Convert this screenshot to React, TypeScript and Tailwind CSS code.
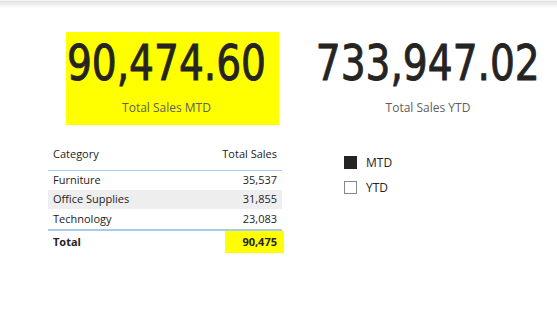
const rows = [
  { category: 'Furniture', sales: '35,537', h: 'h-[19px]' },
  { category: 'Office Supplies', sales: '31,855', h: 'h-[19px]' },
  { category: 'Technology', sales: '23,083', h: 'h-[20px]' },
]

const uiFont = "font-['Segoe_UI','Open_Sans',sans-serif]"
const kpiFont = "font-['DejaVu_Sans_Condensed','Liberation_Sans',sans-serif]"

function KpiCard({ value, label, highlight }: { value: string; label: string; highlight?: boolean }) {
  return (
    <div
      className={`flex flex-col items-center h-[93px] pt-[6px] ${highlight ? 'bg-[#ffff00] w-[213px] pr-[12px]' : 'w-[240px]'}`}
    >
      <span
        className={`${kpiFont} block scale-x-[0.87] text-[50px] leading-[50px] text-[#252423] whitespace-nowrap [-webkit-text-stroke:0.9px_#252423]`}
      >
        {value}
      </span>
      <span className={`${uiFont} mt-[13px] text-[12px] leading-[14px] text-[#605e5c]`}>{label}</span>
    </div>
  )
}

function SalesTable() {
  return (
    <div className={`${uiFont} w-[234px] text-[11px] text-[#252423]`}>
      <div className="flex justify-between items-center h-[29px] pb-[4px] px-[5px] border-b border-[#a6cbef]">
        <span>Category</span>
        <span>Total Sales</span>
      </div>
      {rows.map((r, i) => (
        <div
          key={r.category}
          className={`flex justify-between items-center ${r.h} px-[5px] ${i === 1 ? 'bg-[#eeeeee]' : ''}`}
        >
          <span>{r.category}</span>
          <span className="tabular-nums">{r.sales}</span>
        </div>
      ))}
      <div className="flex justify-between items-stretch h-[24px] border-t-2 border-[#a6cbef]">
        <span className="flex items-center pl-[5px] font-bold">Total</span>
        <span className="flex items-center justify-end w-[59px] -mr-[2px] pr-[7px] bg-[#ffff00] font-bold">
          90,475
        </span>
      </div>
    </div>
  )
}

function Slicer() {
  const items = [
    { label: 'MTD', checked: true },
    { label: 'YTD', checked: false },
  ]
  return (
    <div className={`${uiFont} flex flex-col gap-[12px] text-[12px] text-[#252423]`}>
      {items.map((it) => (
        <div key={it.label} className="flex items-center gap-[9px]">
          <span
            className={`w-[13px] h-[13px] ${it.checked ? 'bg-[#252423]' : 'border border-[#8a8886] bg-white'}`}
          />
          <span className="leading-[13px]">{it.label}</span>
        </div>
      ))}
    </div>
  )
}

export default function App() {
  return (
    <div className="w-[557px] h-[309px] bg-white overflow-hidden">
      <div className="h-[1px] bg-[#f3f3f3]" />
      <div className="h-[7px] bg-gradient-to-b from-[#e0e0e0] to-white" />
      <div className="flex items-start pt-[24px] pl-[66px]">
        <KpiCard value="90,474.60" label="Total Sales MTD" highlight />
        <div className="ml-[29px]">
          <KpiCard value="733,947.02" label="Total Sales YTD" />
        </div>
      </div>
      <div className="flex items-start pt-[17px] pl-[48px]">
        <SalesTable />
        <div className="ml-[62px] pt-[14px]">
          <Slicer />
        </div>
      </div>
    </div>
  )
}
